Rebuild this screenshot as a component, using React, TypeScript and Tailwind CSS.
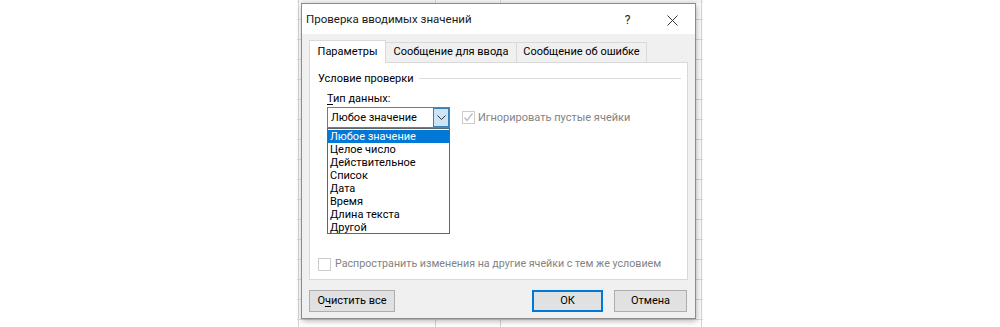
import React from "react";

const items = [
  "Любое значение",
  "Целое число",
  "Действительное",
  "Список",
  "Дата",
  "Время",
  "Длина текста",
  "Другой",
];

function ExcelGrid() {
  const rows = [];
  for (let y = 19; y < 327; y += 20) rows.push(y);
  return (
    <svg width="406" height="327" className="col-start-1 row-start-1">
      <rect x="0" y="0" width="406" height="327" fill="#ffffff" />
      <rect x="0" y="0" width="406" height="3" fill="#f2f2f2" />
      {rows.map((y) => (
        <line key={y} x1="0" x2="406" y1={y + 0.5} y2={y + 0.5} stroke="#dadada" strokeWidth="1" />
      ))}
      <line x1="1.5" x2="1.5" y1="0" y2="327" stroke="#d4d4d4" />
      <line x1="404.5" x2="404.5" y1="0" y2="327" stroke="#d4d4d4" />
      <line x1="138.5" x2="138.5" y1="0" y2="327" stroke="#d4d4d4" />
      <line x1="203.5" x2="203.5" y1="0" y2="327" stroke="#d4d4d4" />
    </svg>
  );
}

function CheckBox({ checked }: { checked?: boolean }) {
  return (
    <div className="w-[13px] h-[13px] border border-[#cccccc] bg-white flex items-center justify-center shrink-0">
      {checked && (
        <svg width="11" height="11" viewBox="0 0 11 11">
          <polyline points="1.5,5.5 4,8.5 9.5,1.5" fill="none" stroke="#bcbcbc" strokeWidth="1.3" />
        </svg>
      )}
    </div>
  );
}

export default function App() {
  return (
    <div
      className="w-[1000px] h-[327px] bg-white flex justify-center overflow-hidden text-[11px] text-black whitespace-nowrap"
      style={{ fontFamily: 'Roboto, "Noto Sans", sans-serif' }}
    >
      <div className="grid w-[406px] h-[327px]">
        <ExcelGrid />
        <div className="col-start-1 row-start-1 pt-[3px] pl-[4px]">
          <div className="w-[395px] h-[316px] border border-[#8c8c8c] bg-[#f0f0f0] flex flex-col shadow-[1px_2px_6px_rgba(0,0,0,0.3)]">
            {/* Title bar */}
            <div className="h-[30px] bg-white flex items-center shrink-0 pt-[2px]">
              <div className="pl-[4px] text-[11.5px] leading-none text-[#1a1a1a] flex-1">Проверка вводимых значений</div>
              <div className="w-[45px] h-full flex items-center justify-center text-[12px] text-[#222]">?</div>
              <div className="w-[45px] h-full flex items-center justify-center">
                <svg width="11" height="11" viewBox="0 0 11 11">
                  <path d="M0.5 0.5 L10.5 10.5 M10.5 0.5 L0.5 10.5" stroke="#333" strokeWidth="1" fill="none" />
                </svg>
              </div>
            </div>
            {/* Body */}
            <div className="flex-1 flex flex-col px-[7px] pt-[6px] pb-[6px]">
              {/* Tabs */}
              <div className="flex items-end h-[22px] shrink-0">
                <div className="w-[77px] h-[23px] mb-[-1px] bg-white border border-b-0 border-[#d9d9d9] flex items-center justify-center relative z-10">
                  Параметры
                </div>
                <div className="w-[131px] h-[20px] bg-[#f0f0f0] border border-l-0 border-b-0 border-[#d9d9d9] flex items-center justify-center">
                  Сообщение для ввода
                </div>
                <div className="w-[130px] h-[20px] bg-[#f0f0f0] border border-l-0 border-b-0 border-[#d9d9d9] flex items-center justify-center">
                  Сообщение об ошибке
                </div>
              </div>
              {/* Panel */}
              <div className="h-[218px] bg-white border border-[#d9d9d9] flex flex-col pl-[8px] pr-[6px] pt-[8px] shrink-0">
                <div className="flex items-center gap-[5px] h-[15px]">
                  <span className="leading-none">Условие проверки</span>
                  <div className="flex-1 h-px bg-[#dcdcdc]" />
                </div>
                <div className="pl-[9px] mt-[5px] h-[15px] leading-[15px]">
                  <span className="underline underline-offset-2">Т</span>ип данных:
                </div>
                <div className="pl-[9px] mt-[1px] flex items-center h-[21px]">
                  <div className="relative w-[123px] h-[21px] shrink-0">
                    <div className="w-full h-full border border-[#7a7a7a] bg-white flex items-center">
                      <span className="pl-[3px] flex-1 leading-none">Любое значение</span>
                      <div className="w-[16px] h-[19px] bg-[#cce4f7] border border-[#3c7fb1] flex items-center justify-center">
                        <svg width="9" height="6" viewBox="0 0 9 6">
                          <polyline points="0.5,0.5 4.5,4.5 8.5,0.5" fill="none" stroke="#333" strokeWidth="1" />
                        </svg>
                      </div>
                    </div>
                    {/* dropdown list */}
                    <div className="absolute left-0 top-[21px] w-[123px] h-[106px] border border-[#646464] bg-white z-20 pt-[1px]">
                      {items.map((it, i) => (
                        <div
                          key={it}
                          className={
                            "h-[13px] leading-[13px] pl-[2px] " +
                            (i === 0 ? "bg-[#0078d7] text-white" : "text-black")
                          }
                        >
                          {it}
                        </div>
                      ))}
                    </div>
                  </div>
                  <div className="ml-[12px] flex items-center gap-[3px]">
                    <CheckBox checked />
                    <span className="text-[#838383] leading-none">Игнорировать пустые ячейки</span>
                  </div>
                </div>
                <div className="flex-1" />
                <div className="flex items-center gap-[4px] h-[14px] mb-[8px]">
                  <CheckBox />
                  <span className="text-[#838383] leading-none text-[10.7px]">Распространить изменения на другие ячейки с тем же условием</span>
                </div>
              </div>
              {/* Buttons */}
              <div className="flex items-end flex-1 pr-[1px]">
                <div className="w-[86px] h-[22px] bg-[#e1e1e1] border border-[#adadad] flex items-center justify-center">
                  <span>О<span className="underline underline-offset-2">ч</span>истить все</span>
                </div>
                <div className="flex-1" />
                <div className="w-[71px] h-[22px] bg-[#e1e1e1] border-2 border-[#0078d7] flex items-center justify-center">
                  ОК
                </div>
                <div className="w-[73px] h-[22px] ml-[11px] bg-[#e1e1e1] border border-[#adadad] flex items-center justify-center">
                  Отмена
                </div>
              </div>
            </div>
          </div>
        </div>
      </div>
    </div>
  );
}
